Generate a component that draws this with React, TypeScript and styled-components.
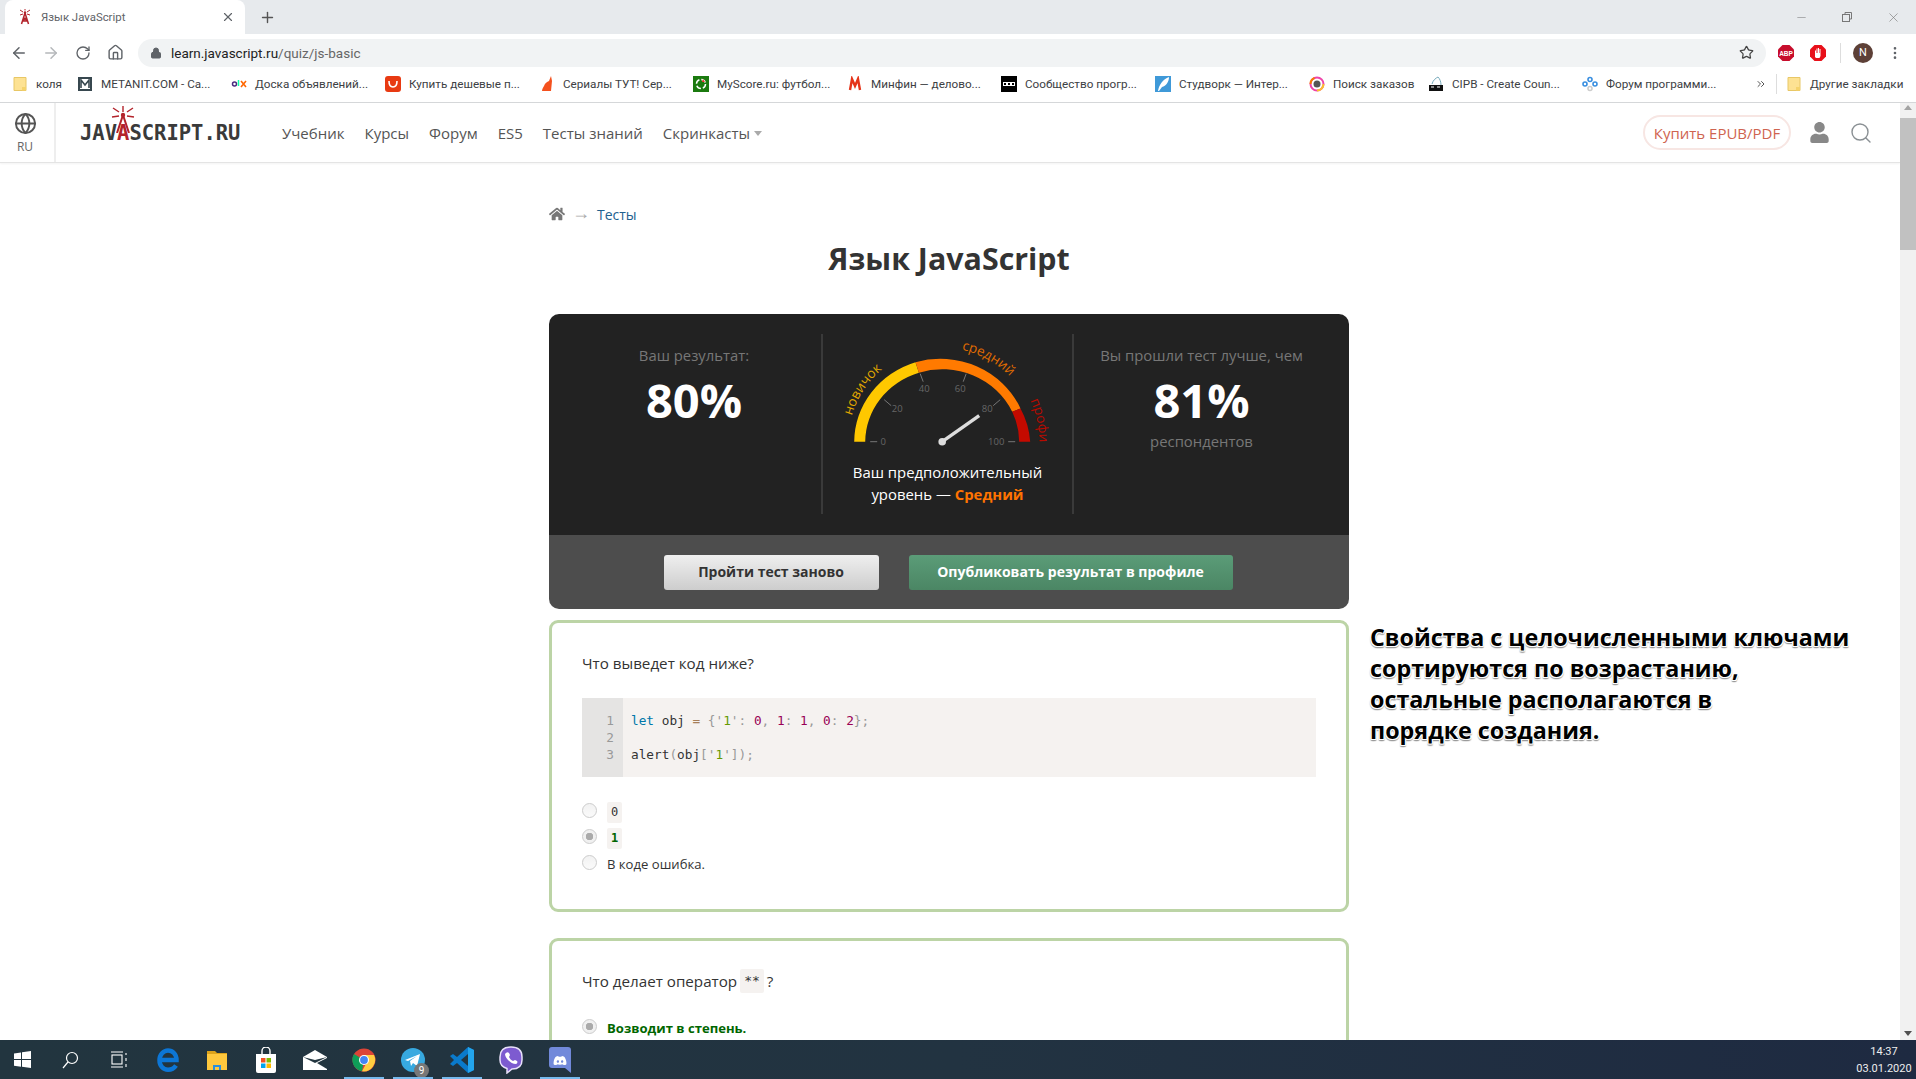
import React from "react";
import styled, { createGlobalStyle } from "styled-components";
import { ArrowLeft, ArrowRight, RotateCw, Home, Lock, Star, Plus, X, Minus, Globe, Search, EllipsisVertical, ChevronsRight } from "lucide-react";
import { FaHome, FaUser, FaDiscord } from "react-icons/fa";

const Global = createGlobalStyle`
  html, body { margin: 0; padding: 0; height: 100%; overflow: hidden; background: #fff; }
  #root { height: 100%; }
  * { box-sizing: border-box; }
`;

const Screen = styled.div`
  height: 1079px; width: 1916px; display: flex; flex-direction: column; overflow: hidden;
  font-family: "Open Sans", "Liberation Sans", sans-serif; color: #333;
`;
const TabStrip = styled.div`
  height: 34px; background: #e7eaed; display: flex; align-items: flex-end; padding-left: 5px; flex: none;
`;
const Tab = styled.div`
  width: 240px; height: 34px; background: #fff; border-radius: 8px 8px 0 0; display: flex; align-items: center;
  padding: 0 10px 0 12px; gap: 8px; font: 11.4px Roboto, "Open Sans", sans-serif; color: #5f6368;
`;
const TabTitle = styled.span` flex: 1; `;
const NewTab = styled.div` width: 44px; height: 34px; display: flex; align-items: center; justify-content: center; color: #555; `;
const Spacer = styled.div` flex: 1; `;
const WinBtn = styled.div` width: 46px; height: 34px; display: flex; align-items: center; justify-content: center; color: #777; `;
const Toolbar = styled.div`
  height: 33px; background: #fff; display: flex; align-items: center; flex: none; padding: 4px 0 0 3px;
`;
const ToolBtn = styled.div<{ $c?: string; $ml?: number }>`
  width: 32px; height: 28px; display: flex; align-items: center; justify-content: center; color: ${p => p.$c || "#5f6368"}; flex: none;
  margin-left: ${p => p.$ml || 0}px;
`;
const Omnibox = styled.div`
  width: 1628px; height: 28px; margin-left: 7px; border-radius: 14px; background: #f1f3f4; display: flex; align-items: center;
  padding: 0 12px 0 12px; gap: 9px; font: 13.5px Roboto, "Open Sans", sans-serif; color: #222; flex: none;
`;
const UrlDim = styled.span` color: #666; `;
const Url = styled.div` flex: 1; `;
const Divider = styled.div<{ $mx?: number }>` width: 1px; height: 20px; background: #ddd; flex: none; margin: 0 ${p => p.$mx ?? 6}px; `;
const Avatar = styled.div`
  width: 20px; height: 20px; border-radius: 50%; background: #5d4037; color: #fff; font: 11px Roboto, sans-serif;
  display: flex; align-items: center; justify-content: center;
`;
const BookmarkBar = styled.div`
  height: 36px; background: #fff; border-bottom: 1px solid #d5d7d9; display: flex; align-items: center; padding: 0 0 2px 12px; flex: none;
  font: 11.7px Roboto, "Open Sans", sans-serif; color: #3c4043;
`;
const Bookmark = styled.div<{ $w: number }>`
  width: ${p => p.$w}px; display: flex; align-items: center; gap: 8px; flex: none; white-space: nowrap; overflow: hidden;
`;
const Favicon = styled.svg` width: 16px; height: 16px; flex: none; `;
const Viewport = styled.div` flex: 1; display: flex; min-height: 0; `;
const Page = styled.div` flex: 1; min-width: 0; overflow: hidden; background: #fff; `;
const SiteHeader = styled.header`
  height: 60px; display: flex; align-items: center; border-bottom: 1px solid #e4e4e4; box-shadow: 0 1px 2px rgba(0,0,0,.05);
`;
const LangCell = styled.div`
  width: 56px; height: 100%; border-right: 2px solid #eee; display: flex; flex-direction: column; align-items: center; justify-content: center;
  font-size: 12px; color: #666; padding: 2px 4px 0 0; gap: 3px; flex: none;
`;
const Logo = styled.div`
  position: relative; margin-left: 24px; width: 202px; flex: none; font: bold 20.5px "DejaVu Sans Mono", monospace; color: #3a3a3a; padding-top: 1px;
`;
const LogoA = styled.span` color: #b3232b; `;
const LogoRays = styled.svg` position: absolute; left: 29px; top: -17px; width: 28px; height: 30px; `;
const Nav = styled.nav` display: flex; align-items: center; gap: 20px; font-size: 15px; color: #555; `;
const NavItem = styled.a` display: flex; align-items: center; gap: 4px; white-space: nowrap; `;
const Caret = styled.i` width: 0; height: 0; border: 4px solid transparent; border-top: 5px solid #aaa; margin-top: 5px; `;
const HeaderRight = styled.div` margin-left: auto; display: flex; align-items: center; padding-right: 27px; `;
const BuyButton = styled.a`
  width: 148px; height: 35px; border: 2px solid #f7e6e3; border-radius: 18px; display: flex; align-items: center; justify-content: center;
  color: #cf6450; font-size: 15px; white-space: nowrap;
`;
const UserSlot = styled.div` margin-left: 16px; width: 24px; display: flex; justify-content: center; color: #888; `;
const SearchSlot = styled.div` margin-left: 18px; width: 24px; display: flex; justify-content: center; color: #8a9094; `;
const Content = styled.div` display: grid; grid-template-columns: 549px 800px 1fr; `;
const Main = styled.main` grid-column: 2; padding-top: 41px; `;
const Crumbs = styled.div` display: flex; align-items: center; height: 20px; font-size: 14px; gap: 7px; `;
const CrumbArrow = styled.span` color: #aaa; font: 18px/20px "Liberation Sans", sans-serif; margin-top: -3px; `;
const CrumbLink = styled.a` color: #22618f; `;
const Title = styled.h1` margin: 15px 0 35px; height: 40px; font-size: 30.4px; line-height: 40px; font-weight: 700; text-align: center; color: #333; `;
const Result = styled.section` border-radius: 10px; overflow: hidden; `;
const Stats = styled.div`
  height: 221px; background: #222; padding-top: 20px; display: grid; grid-template-columns: 272px 253px 275px; color: #fff;
`;
const StatCol = styled.div<{ $pl?: number; $pr?: number }>`
  height: 180px; display: flex; flex-direction: column; align-items: center; padding: 10px ${p => p.$pr || 0}px 0 ${p => p.$pl || 0}px;
`;
const StatLabel = styled.div` font-size: 14.85px; line-height: 22px; color: #777; white-space: nowrap; `;
const StatValue = styled.div` font-size: 47px; line-height: 56px; font-weight: 700; margin: 6px 0 2px; color: #fff; `;
const GaugeCol = styled.div`
  height: 180px; border-left: 2px solid #3a3a3a; border-right: 2px solid #3a3a3a; padding-top: 6px; display: flex; flex-direction: column; align-items: center;
`;
const GaugeSvg = styled.svg` width: 220px; height: 121px; flex: none; overflow: visible; `;
const Level = styled.div` font-size: 14.9px; line-height: 22px; color: #fff; text-align: center; `;
const LevelName = styled.b` color: #ff7300; `;
const Actions = styled.div` height: 74px; background: #4d4d4d; display: flex; align-items: center; justify-content: center; gap: 30px; padding: 1px 2px 0 0; `;
const ActionBtn = styled.button<{ $w: number; $green?: boolean }>`
  width: ${p => p.$w}px; height: 35px; border-radius: 3px; border: none; font: 700 14px "Open Sans", sans-serif; padding: 0 0 2px;
  color: ${p => (p.$green ? "#fff" : "#333")};
  background: ${p => (p.$green ? "linear-gradient(#5b9c78,#4b8664)" : "linear-gradient(#efefef,#cdcdcd)")};
`;
const Card = styled.section<{ $mt: number }>`
  margin-top: ${p => p.$mt}px; border: 3px solid #bcd4a6; border-radius: 9px; padding: 28px 30px 0; min-height: 292px;
`;
const Question = styled.div` font-size: 15.2px; line-height: 24px; color: #333; display: flex; align-items: center; gap: 3px; `;
const CodeBlock = styled.div` margin-top: 23px; display: flex; height: 79px; background: #f5f2f0; font: 12.75px/17px "DejaVu Sans Mono", monospace; color: #333; `;
const Gutter = styled.div` width: 41px; background: #e5e4e3; padding: 14px 9px 0 0; text-align: right; color: #999; white-space: pre-line; flex: none; `;
const CodeText = styled.pre` margin: 0; padding: 14px 0 0 8px; font: inherit; `;
const Tok = styled.span<{ $c: string }>` color: ${p => p.$c}; `;
const Options = styled.div` margin-top: 22px; display: flex; flex-direction: column; `;
const Option = styled.label<{ $correct?: boolean }>`
  display: flex; align-items: center; height: 26px; gap: 10px; font-size: 13.1px;
  font-weight: ${p => (p.$correct ? 700 : 400)}; color: ${p => (p.$correct ? "#060" : "#333")};
`;
const Radio = styled.span<{ $on?: boolean }>`
  width: 15px; height: 15px; border-radius: 50%; border: 1px solid #ccc; flex: none; display: flex; align-items: center; justify-content: center;
  background: ${p => (p.$on ? "radial-gradient(circle, #aaa 0 3.5px, #f0f0f0 4px)" : "linear-gradient(#f2f2f2,#fafafa)")};
  margin-top: -3px;
`;
const Chip = styled.code<{ $green?: boolean; $lg?: boolean }>`
  min-width: 15px; height: ${p => (p.$lg ? 24 : 21)}px; padding: 0 ${p => (p.$lg ? 4 : 3)}px; background: #f5f2f0; border-radius: 2px; text-align: center;
  font: ${p => (p.$lg ? "13px/24px" : "12px/21px")} "DejaVu Sans Mono", monospace;
  color: ${p => (p.$green ? "#060" : "#333")}; font-weight: ${p => (p.$green ? 700 : 400)};
`;
const Aside = styled.aside`
  grid-column: 3; padding: 459px 0 0 21px; font-size: 23.3px; line-height: 31px; font-weight: 700; color: #000; white-space: pre-line;
  text-shadow: 1px 0 0 #fff, -1px 0 0 #fff, 0 -1px 0 #fff, 1px 1px 0 #fff, -1px 1px 0 #fff, 0 2px 1px #999, 1px 2px 1px #aaa, -1px 2px 1px #aaa;
`;
const Scrollbar = styled.div` width: 16px; background: #f1f1f1; display: flex; flex-direction: column; align-items: center; flex: none; `;
const ScrollArrow = styled.i<{ $down?: boolean }>`
  width: 0; height: 0; border: 4px solid transparent; margin: ${p => (p.$down ? "auto 0 4px" : "2px 0 5px")};
  ${p => (p.$down ? "border-top: 5px solid #505050; border-bottom: 0;" : "border-bottom: 5px solid #a3a3a3; border-top: 0;")}
`;
const ScrollThumb = styled.div` width: 16px; height: 132px; background: #c1c1c1; margin-top: 3px; `;
const Taskbar = styled.footer`
  height: 39px; flex: none; display: flex; align-items: stretch; background: linear-gradient(90deg, #22353f, #223341 50%, #1e2a41); color: #fff;
`;
const TaskCell = styled.div<{ $w?: number; $active?: boolean }>`
  width: ${p => p.$w || 49}px; display: flex; align-items: center; justify-content: center; position: relative; flex: none;
  ${p => p.$active && `&::after { content: ""; position: absolute; left: 5px; right: 4px; bottom: 0; height: 2px; background: #76b9ed; }`}
`;
const Badge = styled.span`
  position: absolute; right: 8px; bottom: 1px; width: 15px; height: 15px; border-radius: 50%; background: #777; color: #fff;
  font: 10px/15px Roboto, sans-serif; text-align: center;
`;
const Clock = styled.div`
  margin-left: auto; width: 56px; margin-right: 4px; font: 11px/17px Roboto, sans-serif; text-align: center; align-self: center; color: #eee;
`;

const Tower = () => (
  <Favicon viewBox="0 0 16 16">
    <path d="M8 4 L4.5 15 M8 4 L11.5 15 M5.5 12 H10.5 M6.5 8.5 L10.5 12 M9.5 8.5 L5.5 12" stroke="#b3232b" strokeWidth="1.5" fill="none" />
    <circle cx="8" cy="3.5" r="1.2" fill="#b3232b" />
    <path d="M6 3 L3 1 M6 5 L3 6 M10 3 L13 1 M10 5 L13 6 M8 1.5 V0" stroke="#b3232b" strokeWidth="1" />
  </Favicon>
);
const Folder = () => (
  <Favicon viewBox="0 0 16 16">
    <path d="M2 1.5h7l5 0v13H2z" fill="#fde293" stroke="#e8c766" strokeWidth="1" />
    <rect x="10" y="11" width="4" height="3.5" fill="#f5d36c" />
  </Favicon>
);
const F = {
  metanit: <Favicon viewBox="0 0 16 16"><rect x="1" y="1" width="14" height="14" fill="#37474f" /><rect x="3" y="3" width="10" height="10" fill="#fff" /><path d="M4 12V4l4 5 4-5v8" stroke="#37474f" strokeWidth="1.6" fill="none" /></Favicon>,
  olx: <Favicon viewBox="0 0 16 16"><circle cx="3.5" cy="8" r="2" fill="none" stroke="#4b2b7f" strokeWidth="1.5" /><path d="M7.5 4v6" stroke="#1fa" strokeWidth="1.5" /><path d="M10 5l5 6M15 5l-5 6" stroke="#f60" strokeWidth="1.6" /></Favicon>,
  ali: <Favicon viewBox="0 0 16 16"><rect width="16" height="16" rx="3" fill="#e83a12" /><path d="M4 5c0 4 2 6 4 6s4-2 4-6" stroke="#fff" strokeWidth="1.6" fill="none" /></Favicon>,
  cat: <Favicon viewBox="0 0 16 16"><path d="M12 0l1 5-1 10H3c0-2 1-3 2-5 1-3 3-4 5-5z" fill="#f4511e" /></Favicon>,
  score: <Favicon viewBox="0 0 16 16"><rect width="16" height="16" fill="#1b7a0f" /><circle cx="8" cy="8" r="4.5" stroke="#fff" strokeWidth="1.5" fill="none" strokeDasharray="5 2" /><path d="M10 3l2 3h-3z" fill="#e33" /></Favicon>,
  minfin: <Favicon viewBox="0 0 16 16"><path d="M3 14L5 3l3 7 3-7 2 11" stroke="#e53318" strokeWidth="2.4" fill="none" /></Favicon>,
  dou: <Favicon viewBox="0 0 16 16"><rect width="16" height="16" fill="#000" /><rect x="2" y="6" width="12" height="4" fill="#fff" /><path d="M3 7h2v2H3zM7 7h2v2H7zM11 7h2v2h-2z" fill="#000" /></Favicon>,
  stud: <Favicon viewBox="0 0 16 16"><rect width="16" height="16" fill="#3f99d8" /><path d="M3 15C4 9 8 3 14 1c0 5-3 9-7 10l-3 4z" fill="#fff" /></Favicon>,
  work: <Favicon viewBox="0 0 16 16"><circle cx="8" cy="8" r="6.5" fill="#fff" stroke="#e4a" strokeWidth="2" /><path d="M14.5 8a6.5 6.5 0 0 1-6.5 6.5" stroke="#fbc02d" strokeWidth="2" fill="none" /><path d="M1.5 8a6.5 6.5 0 0 1 4-6" stroke="#f57c00" strokeWidth="2" fill="none" /><circle cx="8" cy="8" r="3.5" fill="#555" /></Favicon>,
  cipb: <Favicon viewBox="0 0 16 16"><rect x="1" y="9" width="14" height="6" fill="#111" /><path d="M3 11h3M9 11h3" stroke="#fff" /><path d="M4 8C5 4 8 2 10 1c2 2 3 5 3 8" stroke="#7ab" fill="none" /></Favicon>,
  forum: <Favicon viewBox="0 0 16 16"><g fill="none" stroke="#3a8fe0" strokeWidth="1.6"><circle cx="8" cy="3.5" r="2" /><circle cx="3" cy="8" r="2" /><circle cx="13" cy="8" r="2" /></g><circle cx="8" cy="12.5" r="2" fill="none" stroke="#ccc" strokeWidth="1.6" /></Favicon>,
};
const marks: { w: number; icon: React.ReactNode; t: string }[] = [
  { w: 65, icon: <Folder />, t: "коля" },
  { w: 154, icon: F.metanit, t: "METANIT.COM - Са..." },
  { w: 154, icon: F.olx, t: "Доска объявлений..." },
  { w: 154, icon: F.ali, t: "Купить дешевые п..." },
  { w: 154, icon: F.cat, t: "Сериалы ТУТ! Сер..." },
  { w: 154, icon: F.score, t: "MyScore.ru: футбол..." },
  { w: 154, icon: F.minfin, t: "Минфин — делово..." },
  { w: 154, icon: F.dou, t: "Сообщество прогр..." },
  { w: 154, icon: F.stud, t: "Студворк — Интер..." },
  { w: 119, icon: F.work, t: "Поиск заказов" },
  { w: 154, icon: F.cipb, t: "CIPB - Create Coun..." },
  { w: 173, icon: F.forum, t: "Форум программи..." },
];

const cx = 104.2, cy = 101.7;
const ticks = [
  { l: [-72, 0, -65, 0], x: -59, y: 0, t: "0" },
  { l: [-58, -42, -51, -36], x: -45, y: -33, t: "20" },
  { l: [-22, -68, -19, -60], x: -18, y: -53, t: "40" },
  { l: [24, -68, 21, -60], x: 18, y: -53, t: "60" },
  { l: [58, -42, 51, -36], x: 45, y: -33, t: "80" },
  { l: [66, 0, 73, 0], x: 54, y: 0, t: "100" },
];
const polar = (deg: number, r: number) => {
  const a = (deg * Math.PI) / 180;
  return `${(cx - Math.cos(a) * r).toFixed(1)} ${(cy - Math.sin(a) * r).toFixed(1)}`;
};
const arc = (a: number, b: number, r = 94) => `M${polar(a, r)} A${r} ${r} 0 0 1 ${polar(b, r)}`;

const Gauge = () => (
  <GaugeSvg viewBox="0 0 220 121">
    <g transform={`translate(${cx} ${cy})`}>
      <path d="M-88 0 A88 84 0 0 1 -26.7 -79.5 L-23.3 -69 A77 73 0 0 0 -77 0 Z" fill="#ffc800" />
      <path d="M-26.7 -79.5 A88 84 0 0 1 78.3 -33.3 L70 -30 A77 73 0 0 0 -23.3 -69 Z" fill="#ff7a00" />
      <path d="M78.3 -33.3 A88 84 0 0 1 88 0 L77 0 A77 73 0 0 0 70 -30 Z" fill="#c40a00" />
      {ticks.map(k => (
        <g key={k.t}>
          <line x1={k.l[0]} y1={k.l[1]} x2={k.l[2]} y2={k.l[3]} stroke="#777" strokeWidth="1" />
          <text x={k.x} y={k.y + 3.5} fontSize="9.5" fill="#666" textAnchor="middle" fontFamily="Open Sans">{k.t}</text>
        </g>
      ))}
      <line x1="0" y1="0" x2="37" y2="-26" stroke="#ddd" strokeWidth="3.4" />
      <circle r="3.8" fill="#ddd" />
    </g>
    <path id="g-a" d={arc(16, 70)} fill="none" />
    <path id="g-b" d={arc(102, 160)} fill="none" />
    <path id="g-c" d={arc(155, 195, 97)} fill="none" />
    <text fontSize="13.5" fontFamily="Open Sans" fill="#e0a800"><textPath href="#g-a">новичок</textPath></text>
    <text fontSize="13.5" fontFamily="Open Sans" fill="#e06c00"><textPath href="#g-b">средний</textPath></text>
    <text fontSize="13.5" fontFamily="Open Sans" fill="#b80a00"><textPath href="#g-c">профи</textPath></text>
  </GaugeSvg>
);

const P = "#999", N = "#905", S = "#690", K = "#07a";

export default function App() {
  return (
    <Screen>
      <Global />
      <TabStrip>
        <Tab><Tower /><TabTitle>Язык JavaScript</TabTitle><X size={14} /></Tab>
        <NewTab><Plus size={17} /></NewTab>
        <Spacer />
        <WinBtn><Minus size={13} strokeWidth={1} /></WinBtn>
        <WinBtn>
          <svg width="12" height="12" viewBox="0 0 12 12" fill="none" stroke="currentColor"><rect x="1.5" y="3.5" width="7" height="7" /><path d="M4 3.5V1.5h6.5V8H8.5" /></svg>
        </WinBtn>
        <WinBtn><X size={15} strokeWidth={1} /></WinBtn>
      </TabStrip>
      <Toolbar>
        <ToolBtn><ArrowLeft size={18} /></ToolBtn>
        <ToolBtn $c="#b5b8bb"><ArrowRight size={18} /></ToolBtn>
        <ToolBtn><RotateCw size={16} /></ToolBtn>
        <ToolBtn><Home size={17} /></ToolBtn>
        <Omnibox>
          <Lock size={12} color="#5f6368" fill="#5f6368" />
          <Url>learn.javascript.ru<UrlDim>/quiz/js-basic</UrlDim></Url>
          <Star size={15} color="#444" />
        </Omnibox>
        <ToolBtn $ml={4}>
          <svg width="18" height="18" viewBox="0 0 18 18"><path d="M5.5 1h7L17 5.5v7L12.5 17h-7L1 12.5v-7z" fill="#c70d2c" /><text x="9" y="11.5" fontSize="6.5" fontWeight="700" fill="#fff" textAnchor="middle" fontFamily="Liberation Sans">ABP</text></svg>
        </ToolBtn>
        <ToolBtn>
          <svg width="18" height="18" viewBox="0 0 18 18"><path d="M5.5 1h7L17 5.5v7L12.5 17h-7L1 12.5v-7z" fill="#e8101a" /><path d="M6 13V6.5h1V9h.5V4.5h1V9H9V4h1v5h.5V5h1v7l-1 2H7z" fill="#fff" /></svg>
        </ToolBtn>
        <Divider />
        <ToolBtn><Avatar>N</Avatar></ToolBtn>
        <ToolBtn><EllipsisVertical size={16} /></ToolBtn>
      </Toolbar>
      <BookmarkBar>
        {marks.map(m => (
          <Bookmark key={m.t} $w={m.w}>{m.icon}{m.t}</Bookmark>
        ))}
        <ChevronsRight size={12} color="#555" />
        <Divider $mx={9} />
        <Bookmark $w={130}><Folder />Другие закладки</Bookmark>
      </BookmarkBar>
      <Viewport>
        <Page>
          <SiteHeader>
            <LangCell><Globe size={23} color="#555" />RU</LangCell>
            <Logo>
              JAV<LogoA>A</LogoA>SCRIPT.RU
              <LogoRays viewBox="0 0 28 30">
                <path d="M14 9V3M10 9L4 5M18 9l6-4M10 13L3 14M18 13l7 1" stroke="#b3232b" strokeWidth="1.4" />
                <circle cx="14" cy="12" r="2.2" fill="#b3232b" />
                <path d="M14 12L8 30M14 12l6 18" stroke="#b3232b" strokeWidth="2" fill="none" />
              </LogoRays>
            </Logo>
            <Nav>
              <NavItem>Учебник</NavItem>
              <NavItem>Курсы</NavItem>
              <NavItem>Форум</NavItem>
              <NavItem>ES5</NavItem>
              <NavItem>Тесты знаний</NavItem>
              <NavItem>Скринкасты<Caret /></NavItem>
            </Nav>
            <HeaderRight>
              <BuyButton>Купить EPUB/PDF</BuyButton>
              <UserSlot><FaUser size={21} /></UserSlot>
              <SearchSlot><Search size={24} strokeWidth={1.4} /></SearchSlot>
            </HeaderRight>
          </SiteHeader>
          <Content>
            <Main>
              <Crumbs>
                <FaHome size={16} color="#777" />
                <CrumbArrow>→</CrumbArrow>
                <CrumbLink>Тесты</CrumbLink>
              </Crumbs>
              <Title>Язык JavaScript</Title>
              <Result>
                <Stats>
                  <StatCol $pl={18}>
                    <StatLabel>Ваш результат:</StatLabel>
                    <StatValue>80%</StatValue>
                  </StatCol>
                  <GaugeCol>
                    <Gauge />
                    <Level>Ваш предположительный<br />уровень — <LevelName>Средний</LevelName></Level>
                  </GaugeCol>
                  <StatCol $pr={20}>
                    <StatLabel>Вы прошли тест лучше, чем</StatLabel>
                    <StatValue>81%</StatValue>
                    <StatLabel>респондентов</StatLabel>
                  </StatCol>
                </Stats>
                <Actions>
                  <ActionBtn $w={215}>Пройти тест заново</ActionBtn>
                  <ActionBtn $w={324} $green>Опубликовать результат в профиле</ActionBtn>
                </Actions>
              </Result>
              <Card $mt={11}>
                <Question>Что выведет код ниже?</Question>
                <CodeBlock>
                  <Gutter>{"1\n2\n3"}</Gutter>
                  <CodeText>
                    <Tok $c={K}>let</Tok> obj <Tok $c="#a67f59">=</Tok> <Tok $c={P}>{"{'"}</Tok><Tok $c={S}>1</Tok><Tok $c={P}>':</Tok> <Tok $c={N}>0</Tok><Tok $c={P}>,</Tok> <Tok $c={N}>1</Tok><Tok $c={P}>:</Tok> <Tok $c={N}>1</Tok><Tok $c={P}>,</Tok> <Tok $c={N}>0</Tok><Tok $c={P}>:</Tok> <Tok $c={N}>2</Tok><Tok $c={P}>{"};"}</Tok>
                    {"\n\n"}alert<Tok $c={P}>(</Tok>obj<Tok $c={P}>['</Tok><Tok $c={S}>1</Tok><Tok $c={P}>']);</Tok>
                  </CodeText>
                </CodeBlock>
                <Options>
                  <Option><Radio /><Chip>0</Chip></Option>
                  <Option><Radio $on /><Chip $green>1</Chip></Option>
                  <Option><Radio />В коде ошибка.</Option>
                </Options>
              </Card>
              <Card $mt={26}>
                <Question>Что делает оператор <Chip $lg>**</Chip>?</Question>
                <Options>
                  <Option $correct><Radio $on />Возводит в степень.</Option>
                </Options>
              </Card>
            </Main>
            <Aside>{"Свойства с целочисленными ключами\nсортируются по возрастанию,\nостальные располагаются в\nпорядке создания."}</Aside>
          </Content>
        </Page>
        <Scrollbar>
          <ScrollArrow />
          <ScrollThumb />
          <ScrollArrow $down />
        </Scrollbar>
      </Viewport>
      <Taskbar>
        <TaskCell $w={45}>
          <svg width="17" height="17" viewBox="0 0 17 17" fill="#fff"><path d="M0 2.4l7-1v6.7H0zM8 1.2L17 0v8.1H8zM0 9h7v6.7l-7-1zM8 9h9v8l-9-1.2z" /></svg>
        </TaskCell>
        <TaskCell>
          <svg width="18" height="18" viewBox="0 0 18 18" fill="none" stroke="#fff" strokeWidth="1.2"><circle cx="11" cy="7" r="5.5" /><path d="M7 11l-5 6" /></svg>
        </TaskCell>
        <TaskCell>
          <svg width="18" height="20" viewBox="0 0 18 20" fill="none" stroke="#fff" strokeWidth="1.1"><rect x="2" y="5" width="10" height="9" /><path d="M1 2h12M1 17h12M16 3v2M16 8v3M16 14v3" /></svg>
        </TaskCell>
        <TaskCell>
          <svg width="22" height="24" viewBox="0 0 22 24" fill="none" stroke="#0c76d6" strokeWidth="4.5"><path d="M19 17.5c-2 3-5 4.2-8 4.2-5 0-8.500-4-8.500-9.500S6.500 2.500 11 2.500s8.500 3.500 8.500 9.500H4" /></svg>
        </TaskCell>
        <TaskCell>
          <svg width="24" height="24" viewBox="0 0 24 24"><path d="M2 3h8l2 2h10v4H2z" fill="#dda31b" /><rect x="2" y="6" width="20" height="16" fill="#ffc83d" /><path d="M8 22v-5h8v5h-2v-3h-4v3z" fill="#2a8fdc" /></svg>
        </TaskCell>
        <TaskCell>
          <svg width="24" height="26" viewBox="0 0 24 26"><path d="M2 7h20v17a2 2 0 0 1-2 2H4a2 2 0 0 1-2-2z" fill="#fff" /><path d="M8 7V4a4 4 0 0 1 8 0v3" fill="none" stroke="#fff" strokeWidth="1.4" /><path d="M7 11h4.500v4.500H7z" fill="#f25022" /><path d="M12.500 11H17v4.500h-4.500z" fill="#7fba00" /><path d="M7 16.500h4.500V21H7z" fill="#00a4ef" /><path d="M12.500 16.500H17V21h-4.500z" fill="#ffb900" /></svg>
        </TaskCell>
        <TaskCell>
          <svg width="24" height="20" viewBox="0 0 24 20"><path d="M0 7L12 0l12 7v13H0z" fill="#fff" /><path d="M0 7l12 6 12-6-12 3z" fill="#22353f" /><path d="M24 8L14 13l10 6z" fill="#22353f" /></svg>
        </TaskCell>
        <TaskCell $active>
          <svg width="24" height="24" viewBox="0 0 24 24"><circle cx="12" cy="12" r="11.5" fill="#db4437" /><path d="M12 12L2 6a11.5 11.5 0 0 0 8 17.3z" fill="#0f9d58" /><path d="M12 7h10a11.5 11.5 0 0 1-12 16.3L15 14z" fill="#ffcd40" /><circle cx="12" cy="12" r="5" fill="#fff" /><circle cx="12" cy="12" r="3.9" fill="#4285f4" /></svg>
        </TaskCell>
        <TaskCell $active>
          <svg width="24" height="24" viewBox="0 0 24 24"><circle cx="12" cy="12" r="12" fill="#37a9e0" /><path d="M4 12l15-6-3 12-4-3-2 3-1-5 7-5-9 5z" fill="#fff" /></svg>
          <Badge>9</Badge>
        </TaskCell>
        <TaskCell $active>
          <svg width="24" height="26" viewBox="0 0 24 26"><path d="M18 0l6 3v20l-6 3-11-10-4 3-3-2 4-4-4-4 3-2 4 3z" fill="#0a7acb" /><path d="M18 0l6 3v20l-6 3z" fill="#23a4ec" /><path d="M18 7l-7 6 7 6z" fill="#22353f" /></svg>
        </TaskCell>
        <TaskCell>
          <svg width="24" height="28" viewBox="0 0 24 28"><path d="M12 1c7 0 11 3 11 10v3c0 6-4 9-10 9l-5 4v-4.500C3 21 1 18 1 14v-3C1 4 5 1 12 1z" fill="#7d5bd0" stroke="#e8e0fa" strokeWidth="1.5" /><path d="M7 7c1-1 2-1 3 0l1 2-1 2c1 2 2 3 4 4l2-1 2 1c1 1 0 3-1 3-5 0-11-6-11-10z" fill="#fff" /></svg>
        </TaskCell>
        <TaskCell $active>
          <svg width="24" height="28" viewBox="0 0 24 28"><path d="M4 1h16a3 3 0 0 1 3 3v23l-6-5H4a3 3 0 0 1-3-3V4a3 3 0 0 1 3-3z" fill="#7289da" /><foreignObject x="5" y="5" width="14" height="14"><FaDiscord size={14} color="#fff" /></foreignObject></svg>
        </TaskCell>
        <Clock>14:37<br />03.01.2020</Clock>
      </Taskbar>
    </Screen>
  );
}
